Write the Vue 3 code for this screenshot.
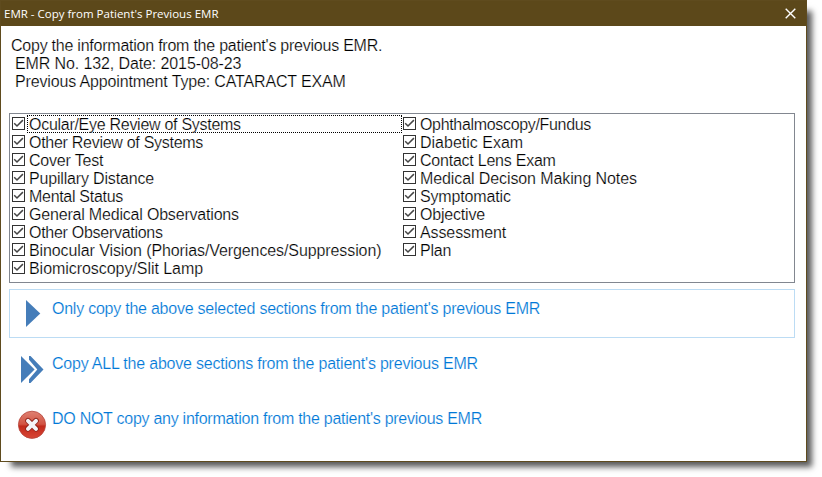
<!-- CopyPreviousEmr.vue -->
<template>
  <div class="desktop">
    <div class="window">
      <div class="titlebar">
        <span class="title">EMR - Copy from Patient's Previous EMR</span>
        <svg class="close" width="11" height="11" viewBox="0 0 11 11">
          <path d="M0.7 0.7L10.3 10.3M10.3 0.7L0.7 10.3" stroke="#fff" stroke-width="1.4" fill="none" />
        </svg>
      </div>

      <div class="content">
        <div class="intro">
          <div class="line first">Copy the information from the patient's previous EMR.</div>
          <div class="line second">EMR No. 132, Date: 2015-08-23</div>
          <div class="line third">Previous Appointment Type: CATARACT EXAM</div>
        </div>

        <div class="sections">
          <div v-for="(column, i) in columns" :key="i" class="column">
            <div v-for="item in column" :key="item.name" class="item" @click="item.checked = !item.checked">
              <svg class="check" width="13" height="13" viewBox="0 0 13 13">
                <rect x="0.5" y="0.5" width="12" height="12" fill="#fff" stroke="#333" />
                <path v-if="item.checked" d="M2.2 6.2L5 9L10.9 3.1" fill="none" stroke="#444" stroke-width="1.5" />
              </svg>
              <span class="label" :class="{ focused: item.name === focused }">
                <span :style="{ letterSpacing: item.spacing + 'px' }">{{ item.name }}</span>
              </span>
            </div>
          </div>
        </div>

        <button class="command active">
          <svg class="icon" width="30" height="30" viewBox="0 0 30 30">
            <path d="M9 1L23.3 14.5L9 28Z" fill="#457db9" />
          </svg>
          <span class="text only">Only copy the above selected sections from the patient's previous EMR</span>
        </button>
        <button class="command">
          <svg class="icon" width="30" height="30" viewBox="0 0 30 30">
            <path d="M4 2L17.6 15.5L4 29Z" fill="#457db9" />
            <path d="M12 2H13.5L26.5 15.5L13.5 29H12V25.2L20.3 15.5L12 5.8Z" fill="#457db9" />
          </svg>
          <span class="text all">Copy ALL the above sections from the patient's previous EMR</span>
        </button>
        <button class="command">
          <svg class="icon" width="30" height="30" viewBox="0 0 30 30">
            <defs>
              <linearGradient id="red" x1="0" y1="0" x2="0" y2="1">
                <stop offset="0" stop-color="#df8172" />
                <stop offset="0.48" stop-color="#d25343" />
                <stop offset="0.55" stop-color="#c22a1c" />
                <stop offset="1" stop-color="#d84635" />
              </linearGradient>
            </defs>
            <circle cx="15" cy="15.8" r="13.6" fill="url(#red)" stroke="#b5443a" stroke-width="0.8" />
            <path d="M11 11.8L19 19.8M19 11.8L11 19.8" stroke="#8e2219" stroke-width="5.6" stroke-linecap="round" />
            <path d="M11 11.8L19 19.8M19 11.8L11 19.8" stroke="#f4f3f8" stroke-width="4" stroke-linecap="round" />
          </svg>
          <span class="text none">DO NOT copy any information from the patient's previous EMR</span>
        </button>
      </div>
    </div>
  </div>
</template>

<script setup>
import { reactive, ref } from 'vue'

const focused = ref('Ocular/Eye Review of Systems')

const section = (name, spacing = 0) => ({ name, spacing, checked: true })

const columns = reactive([
  [
    section('Ocular/Eye Review of Systems', -0.28),
    section('Other Review of Systems', -0.28),
    section('Cover Test', -0.2),
    section('Pupillary Distance', -0.17),
    section('Mental Status', -0.3),
    section('General Medical Observations', -0.19),
    section('Other Observations', -0.28),
    section('Binocular Vision (Phorias/Vergences/Suppression)', -0.1),
    section('Biomicroscopy/Slit Lamp', -0.05)
  ],
  [
    section('Ophthalmoscopy/Fundus', -0.33),
    section('Diabetic Exam'),
    section('Contact Lens Exam', -0.23),
    section('Medical Decison Making Notes', -0.1),
    section('Symptomatic', -0.15),
    section('Objective', -0.2),
    section('Assessment', -0.1),
    section('Plan', -0.2)
  ]
])
</script>

<style>
body {
  background: #fff;
}
</style>

<style scoped>
.desktop {
  width: 822px;
  height: 477px;
  overflow: hidden;
}

.window {
  box-sizing: border-box;
  width: 807px;
  height: 462px;
  border: 1px solid #5f4b1e;
  background: #fff;
  box-shadow: 8px 8px 6px -3px rgba(0, 0, 0, 0.65);
  font: 16px/18px "Liberation Sans", Arial, sans-serif;
  color: #000;
}

.titlebar {
  display: flex;
  align-items: center;
  justify-content: space-between;
  height: 25px;
  padding: 0 10px 0 3px;
  background: #5c481a;
  color: #fff;
}

.title {
  font: 11.5px/24px "Open Sans", "Noto Sans", sans-serif;
  white-space: nowrap;
}

.close {
  margin-bottom: 1px;
}

.content {
  padding: 11px 11px 0 8px;
}

.intro {
  height: 76px;
  padding-left: 2px;
}

.line {
  width: max-content;
  white-space: pre;
}

.line,
.label {
  -webkit-text-stroke: 0.22px #fff;
}

.first {
  letter-spacing: -0.235px;
}

.second {
  margin-left: 4px;
  letter-spacing: -0.11px;
}

.third {
  margin-left: 4px;
  letter-spacing: -0.15px;
}

.sections {
  box-sizing: border-box;
  display: flex;
  width: 786px;
  height: 170px;
  padding: 1px 0 1px 2px;
  border: 1px solid #828790;
}

.column {
  flex: none;
  width: 391px;
}

.item {
  display: flex;
  height: 18px;
}

.check {
  flex: none;
  margin-top: 2px;
}

.label {
  box-sizing: border-box;
  flex: 1;
  height: 18px;
  margin: 0 1px 0 2px;
  padding: 1px 0 0 2px;
  white-space: nowrap;
}

.focused {
  padding: 0 0 0 1px;
  border: 1px dotted #000;
}

.command {
  box-sizing: border-box;
  display: flex;
  width: 786px;
  height: 49px;
  margin: 6px 0 0;
  padding: 9px 7px;
  border: 1px solid transparent;
  background: none;
  color: #0078d7;
  font: inherit;
  text-align: left;
  white-space: nowrap;
}

.active {
  border-color: #bcdcf4;
}

.icon {
  flex: none;
  margin: 0 5px 0 0;
}

.text {
  padding-top: 1px;
  -webkit-text-stroke: 0.18px #fff;
}

.only {
  letter-spacing: -0.24px;
}

.all {
  letter-spacing: -0.21px;
}

.none {
  letter-spacing: -0.265px;
}
</style>
